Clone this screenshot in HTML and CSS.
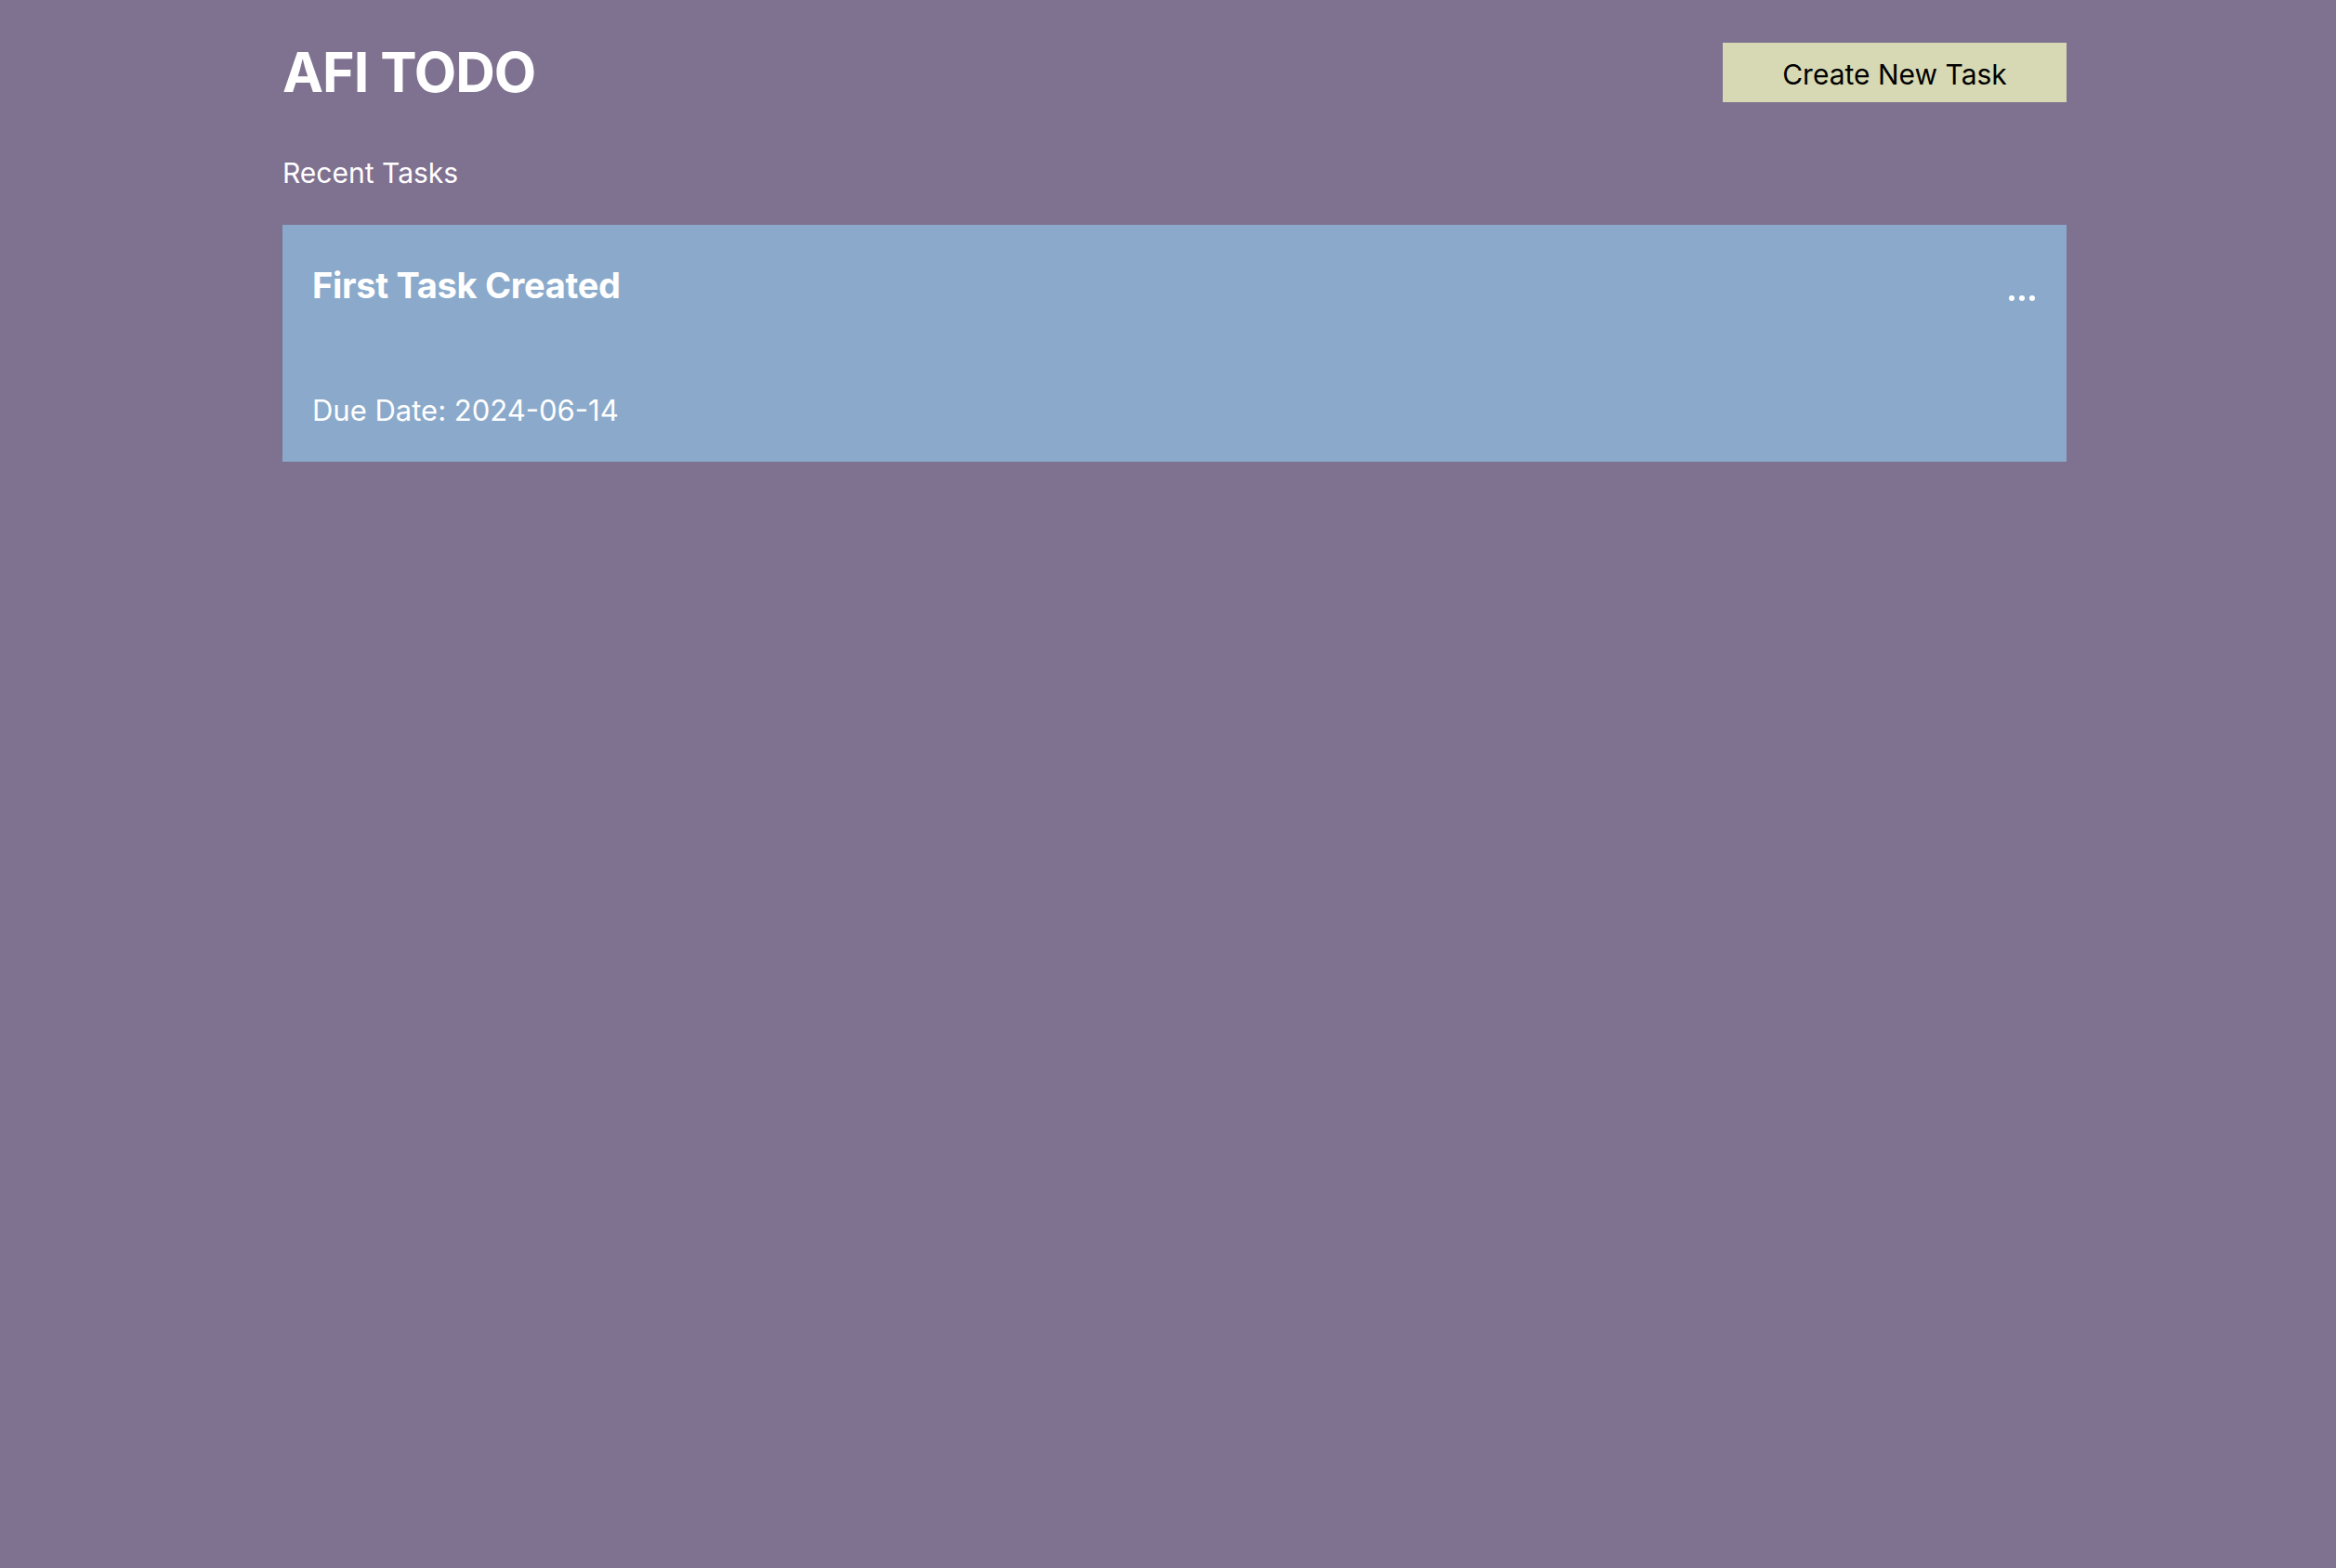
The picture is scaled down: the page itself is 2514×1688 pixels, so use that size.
FILE: index.html
```html
<!DOCTYPE html>
<html lang="en">
<head>
<meta charset="utf-8">
<title>AFI TODO</title>
<link rel="stylesheet" href="styles.css">
</head>
<body>
<div class="container">
  <header class="header">
    <h1 class="title">AFI TODO</h1>
    <button class="create-btn">Create New Task</button>
  </header>
  <h2 class="section-title">Recent Tasks</h2>
  <div class="task-list">
    <div class="task-card">
      <div class="task-top">
        <h3 class="task-title">First Task Created</h3>
        <div class="task-menu"><span class="dot"></span><span class="dot"></span><span class="dot"></span></div>
      </div>
      <p class="task-due">Due Date: 2024-06-14</p>
    </div>
  </div>
</div>
</body>
</html>
```
FILE: styles.css
```css
html, body {
  margin: 0;
  padding: 0;
  background: #7f7190;
  min-height: 100%;
}
body {
  font-family: Inter, "Noto Sans", "Liberation Sans", sans-serif;
  color: #ffffff;
  min-height: 1688px;
}
.container {
  width: 1920px;
  margin-left: 304px;
  padding-top: 46px;
}
.header {
  display: flex;
  justify-content: space-between;
  align-items: center;
  height: 64px;
}
.title {
  margin: 0;
  font-size: 59px;
  font-weight: 700;
  line-height: 64px;
  letter-spacing: -1px;
}
.create-btn {
  width: 370px;
  height: 64px;
  border: none;
  background: #d6d9b3;
  color: #000000;
  font-family: inherit;
  font-size: 30px;
  font-weight: 400;
  padding: 4px 0 0 0;
}
.section-title {
  margin: 0;
  margin-top: 56px;
  font-size: 30px;
  font-weight: 400;
  line-height: 40px;
}
.task-list {
  margin-top: 36px;
}
.task-card {
  background: #8baacb;
  height: 255px;
  box-sizing: border-box;
  padding: 37px 34px 0 32px;
  display: flex;
  flex-direction: column;
}
.task-top {
  display: flex;
  justify-content: space-between;
  align-items: flex-start;
}
.task-title {
  margin: 0;
  font-size: 38px;
  font-weight: 700;
  line-height: 56px;
  letter-spacing: -0.3px;
}
.task-menu {
  display: flex;
  gap: 5px;
  margin-top: 39px;
}
.dot {
  width: 6px;
  height: 6px;
  border-radius: 50%;
  background: #ffffff;
}
.task-due {
  margin: 0;
  margin-top: 85px;
  font-size: 31px;
  line-height: 44px;
}
```
